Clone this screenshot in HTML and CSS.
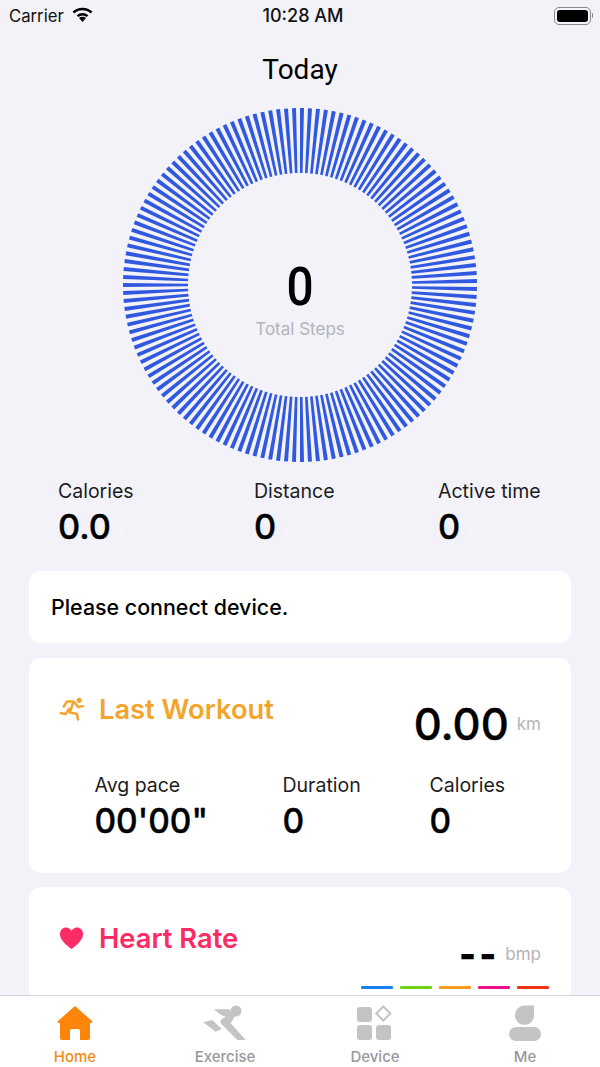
FILE: index.html
```html
<!DOCTYPE html>
<html lang="en">
<head>
<meta charset="utf-8">
<title>Today</title>
<link rel="stylesheet" href="styles.css">
</head>
<body>
<div class="app">
  <div class="status">
    <div class="status-left">
      <span>Carrier</span>
      <svg class="wifi" viewBox="0 0 18 13"><path d="M9 13 6 9.600a4.400 4.400 0 0 1 6 0Z"/><path d="M9 5.200a7.600 7.600 0 0 1 5 2l-1.300 1.500a5.600 5.600 0 0 0-7.400 0L4 7.200a7.600 7.600 0 0 1 5-2Z"/><path d="M9 .6a12.400 12.400 0 0 1 8.600 3.400l-1.500 1.600a10.200 10.200 0 0 0-14.200 0L.4 4A12.400 12.400 0 0 1 9 .6Z"/></svg>
    </div>
    <span class="clock">10:28 AM</span>
    <div class="battery"><span class="battery-body"><span class="battery-fill"></span></span><span class="battery-tip"></span></div>
  </div>
  <main class="content">
    <h1 class="title">Today</h1>
    <div class="ring">
      <svg viewBox="-178 -178 356 356" class="ring-svg">
        <defs>
          <polygon id="t1" points="-177,-2 -112,-1.300 -112,1.300 -177,2"/>
          <g id="t2"><use href="#t1"/><use href="#t1" transform="rotate(2.58993)"/></g>
          <g id="t4"><use href="#t2"/><use href="#t2" transform="rotate(5.17986)"/></g>
          <g id="t8"><use href="#t4"/><use href="#t4" transform="rotate(10.35971)"/></g>
          <g id="t16"><use href="#t8"/><use href="#t8" transform="rotate(20.71942)"/></g>
          <g id="t32"><use href="#t16"/><use href="#t16" transform="rotate(41.43885)"/></g>
          <g id="t64"><use href="#t32"/><use href="#t32" transform="rotate(82.87770)"/></g>
          <g id="t128"><use href="#t64"/><use href="#t64" transform="rotate(165.75540)"/></g>
        </defs>
        <g class="ticks"><use href="#t128"/><use href="#t8" transform="rotate(331.51079)"/><use href="#t2" transform="rotate(352.23022)"/><use href="#t1" transform="rotate(357.41007)"/></g>
      </svg>
      <div class="ring-center">
        <div class="steps"><span class="steps-num">0</span></div>
        <div class="steps-label">Total Steps</div>
      </div>
    </div>
    <div class="stats">
      <div class="stat"><div class="label">Calories</div><div class="value">0.0<span class="faint">kcal</span></div></div>
      <div class="stat"><div class="label">Distance</div><div class="value">0<span class="faint">km</span></div></div>
      <div class="stat"><div class="label">Active time</div><div class="value">0<span class="faint">Min</span></div></div>
    </div>
    <section class="card notice">Please connect device.</section>
    <section class="card workout">
      <div class="card-head">
        <div class="card-title orange">
          <svg class="card-icon" viewBox="0 0 26 24"><circle cx="21" cy="3" r="2.700" fill="currentColor"/><path d="M5 9.400 8.300 4.200H15L20.300 10 24.700 9M15 4.500 11.300 15.700 18.700 17.300 19.700 23M10.300 12 7 17.300 2 16.300" fill="none" stroke="currentColor" stroke-width="2.600" stroke-linecap="round" stroke-linejoin="round"/></svg>
          <span>Last Workout</span>
        </div>
        <div class="big-value"><span class="big">0.00</span><span class="unit">km</span></div>
      </div>
      <div class="workout-stats">
        <div class="stat"><div class="label">Avg pace</div><div class="value">00'00"</div></div>
        <div class="stat"><div class="label">Duration</div><div class="value">0</div></div>
        <div class="stat"><div class="label">Calories</div><div class="value">0</div></div>
      </div>
    </section>
    <section class="card heart">
      <div class="card-head">
        <div class="card-title pink">
          <svg class="card-icon" viewBox="0 0 26 24"><path d="M13 23.500C6 18 1 13.500 1 7.800 1 3.800 3.900 1 7.300 1 9.700 1 11.800 2.300 13 4.500 14.200 2.300 16.300 1 18.700 1 22.100 1 25 3.800 25 7.800 25 13.500 20 18 13 23.500Z" fill="currentColor"/></svg>
          <span>Heart Rate</span>
        </div>
        <div class="bpm"><span class="dashes">--</span><span class="unit">bmp</span></div>
      </div>
      <div class="zones">
        <span class="zone z1"></span><span class="zone z2"></span><span class="zone z3"></span><span class="zone z4"></span><span class="zone z5"></span>
      </div>
    </section>
  </main>
  <nav class="tabs">
    <div class="tab active">
      <svg class="tab-icon" viewBox="0 0 36 36"><path d="M18 1 35 16Q36 18 34 18H33V33Q33 35 31 35H23V26Q23 24 21 24H15Q13 24 13 26V35H5Q3 35 3 33V18H2Q0 18 1 16Z"/></svg>
      <span>Home</span>
    </div>
    <div class="tab">
      <svg class="tab-icon wide" viewBox="0 0 44 36"><circle cx="33" cy="6" r="5.500"/><path d="M11 4.300H26L32 11 27.700 18.300 42.700 35H34.300L17.700 18.300V15L22.700 11.700 17 9.300Z"/><path d="M.3 17.300 9.300 15 18.700 24 12.700 26.700Z"/></svg>
      <span>Exercise</span>
    </div>
    <div class="tab">
      <svg class="tab-icon" viewBox="0 0 36 36"><rect x="0" y="2" width="15" height="15" rx="3"/><rect x="0" y="20" width="15" height="15" rx="3"/><rect x="19" y="20" width="15" height="15" rx="3"/><path d="M26.300 1.500 33.300 8.500 26.300 15.500 19.300 8.500Z" class="diamond"/></svg>
      <span>Device</span>
    </div>
    <div class="tab">
      <svg class="tab-icon" viewBox="0 0 36 36"><path d="M27 0V10A9.500 9.500 0 0 1 8 10 9.500 9.500 0 0 1 17.500 0Z" transform="translate(0 .5)"/><rect x="2" y="22" width="32" height="14" rx="7"/></svg>
      <span>Me</span>
    </div>
  </nav>
</div>
</body>
</html>
```
FILE: styles.css
```css
* { box-sizing: border-box; }
html, body { margin: 0; padding: 0; }
body { font-family: Inter, "Liberation Sans", sans-serif; color: #000; background: #f2f2f8; }
.app { width: 600px; height: 1067px; display: flex; flex-direction: column; overflow: hidden; }
.status { height: 32px; flex: none; display: flex; align-items: center; justify-content: space-between; padding: 0 7px 1px 9px; position: relative; font-size: 16.700px; color: #111; }
.status-left { display: flex; align-items: center; gap: 8px; }
.wifi { width: 21px; height: 15px; fill: #000; margin-top: -3px; }
.clock { position: absolute; left: 6px; right: 0; text-align: center; font-weight: 500; font-size: 18px; }
.battery { display: flex; align-items: center; gap: 1px; }
.battery-body { width: 37px; height: 18px; border: 1px solid #8a8a8e; border-radius: 5px; padding: 2px; display: block; }
.battery-fill { display: block; height: 100%; background: #000; border-radius: 3px; }
.battery-tip { width: 1.500px; height: 5px; background: #8a8a8e; border-radius: 0 1px 1px 0; }
.content { flex: 1; min-height: 0; overflow: hidden; display: flex; flex-direction: column; }
.title { margin: 19px 0 0; height: 38px; line-height: 38px; font-size: 28px; font-weight: 400; text-align: center; font-family: Roboto, sans-serif; }
.ring { position: relative; width: 356px; height: 356px; margin: 18px auto 0; flex: none; }
.ring-svg { display: block; width: 356px; height: 356px; }
.ticks { fill: #3059e0; }
.ring-center { position: absolute; left: 0; right: 0; top: 157px; text-align: center; }
.steps { font-family: Roboto, sans-serif; font-weight: 500; font-size: 53px; line-height: 46px; }
.steps-num { display: inline-block; transform: scaleX(.9); }
.steps-label { font-size: 17px; line-height: 20px; margin-top: 9px; color: #b4b4b8; }
.stats { display: grid; grid-template-columns: 196px 184px auto; padding-left: 58px; margin-top: 16px; flex: none; }
.label { font-size: 19.500px; line-height: 24px; color: #1c1c1e; }
.value { font-size: 34.300px; line-height: 40px; font-weight: 500; margin-top: 4px; -webkit-text-stroke: .4px #000; }
.faint { font-size: 16px; font-weight: 400; color: #f6f6fb; margin-left: 8px; -webkit-text-stroke: 0; }
.card { background: #fff; border-radius: 12px; margin: 0 29px; flex: none; }
.notice { height: 72px; margin-top: 18px; padding: 0 22px; display: flex; align-items: center; font-size: 21.400px; font-weight: 500; }
.workout { height: 215px; margin-top: 15px; padding: 0 30px; }
.heart { height: 215px; margin-top: 14px; padding: 0 30px; }
.card-head { display: flex; justify-content: space-between; }
.card-title { display: flex; align-items: center; gap: 15px; height: 32px; margin-top: 35px; font-size: 27.300px; font-weight: 600; }
.orange { color: #f3a52b; }
.pink { color: #fb2b65; }
.card-icon { width: 25px; height: 24px; }
.big-value { display: flex; align-items: center; gap: 8px; margin-top: 39px; }
.big { font-size: 43.500px; line-height: 54px; font-weight: 500; -webkit-text-stroke: .4px #000; }
.unit { font-size: 17px; color: #b4b4b8; }
.workout-stats { display: grid; grid-template-columns: 188px 147px auto; padding-left: 35.500px; margin-top: 22px; }
.workout-stats .value { font-size: 33.500px; margin-top: 4px; }
.bpm { display: flex; align-items: center; gap: 9px; margin-top: 49px; height: 36px; }
.dashes { font-size: 36px; font-weight: 900; line-height: 36px; letter-spacing: 3px; margin-right: -3px; }
.zones { display: flex; justify-content: flex-end; gap: 7px; margin-top: 14px; margin-right: -8px; }
.zone { width: 32px; height: 3px; border-radius: 1px; }
.z1 { background: #1a7ff0; }
.z2 { background: #6fd214; }
.z3 { background: #f99a1c; }
.z4 { background: #f0108c; }
.z5 { background: #ee3414; }
.tabs { height: 72px; flex: none; background: #fff; border-top: 1px solid #d6d6da; display: grid; grid-template-columns: repeat(4, 150px); position: relative; }
.tab { display: flex; flex-direction: column; align-items: center; color: #98989d; font-size: 15px; font-weight: 500; padding-top: 9px; }
.tab span { line-height: 17px; margin-top: 7px; }
.tab-icon { width: 36px; height: 36px; fill: #c4c4c4; display: block; }
.tab-icon.wide { width: 44px; }
.diamond { fill: none; stroke: #c4c4c4; stroke-width: 2; }
.tab.active { color: #f68a15; }
.tab.active .tab-icon { fill: #fd850b; }
```
